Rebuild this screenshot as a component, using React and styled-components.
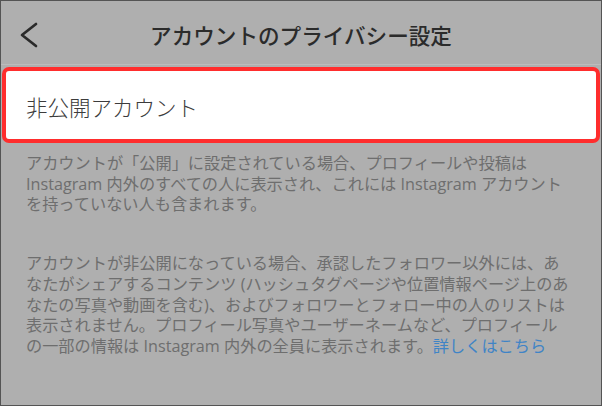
import React from "react";
import styled, { createGlobalStyle } from "styled-components";

const GlobalStyle = createGlobalStyle`
  html, body {
    margin: 0;
    padding: 0;
    background: #afafaf;
  }
  * {
    box-sizing: border-box;
  }
`;

const Screen = styled.div`
  width: 602px;
  height: 406px;
  border: 1px solid #545454;
  background: #afafaf;
  font-family: Roboto, "Noto Sans CJK JP", sans-serif;
  overflow: hidden;
`;

const Header = styled.header`
  display: grid;
  grid-template-columns: 1fr auto 1fr;
  align-items: center;
  height: 64px;
  padding-top: 4px;
  border-bottom: 1px solid #bcbcbc;
`;

const BackButton = styled.button`
  justify-self: start;
  display: flex;
  align-items: center;
  margin-left: 15px;
  padding: 0;
  border: none;
  background: none;
`;

const Title = styled.h1`
  margin: 0;
  font-size: 21.6px;
  font-weight: 500;
  color: #2b2b2b;
  white-space: nowrap;
`;

const Highlight = styled.div`
  margin: 2px 1px 0;
  height: 76px;
  border: 4px solid #ff2d2d;
  border-radius: 7px;
  background: #ffffff;
  display: flex;
  align-items: center;
  padding: 2px 0 0 20px;
`;

const OptionLabel = styled.span`
  font-size: 21.5px;
  font-weight: 300;
  color: #3c3c3c;
`;

const Body = styled.div`
  display: flex;
  flex-direction: column;
  gap: 38px;
  padding: 10px 0 0 25px;
`;

const Paragraph = styled.p`
  margin: 0;
  font-family: "Open Sans", "Noto Sans CJK JP", sans-serif;
  font-size: 16.2px;
  line-height: 20.7px;
  color: #6e6e6e;
  white-space: nowrap;
`;

const Link = styled.a`
  color: #3f84c6;
  text-decoration: none;
`;

function ChevronLeft() {
  return (
    <svg width="24" height="30" viewBox="0 0 24 30" fill="none">
      <path
        d="M20 4 L6 15 L20 26"
        stroke="#2a2a2a"
        strokeWidth="2.7"
        strokeLinecap="round"
        strokeLinejoin="round"
      />
    </svg>
  );
}

export default function App() {
  return (
    <>
      <GlobalStyle />
      <Screen>
        <Header>
          <BackButton aria-label="戻る">
            <ChevronLeft />
          </BackButton>
          <Title>アカウントのプライバシー設定</Title>
          <span />
        </Header>
        <Highlight>
          <OptionLabel>非公開アカウント</OptionLabel>
        </Highlight>
        <Body>
          <Paragraph>
            アカウントが「公開」に設定されている場合、プロフィールや投稿は
            <br />
            Instagram 内外のすべての人に表示され、これには Instagram アカウント
            <br />
            を持っていない人も含まれます。
          </Paragraph>
          <Paragraph>
            アカウントが非公開になっている場合、承認したフォロワー以外には、あ
            <br />
            なたがシェアするコンテンツ (ハッシュタグページや位置情報ページ上のあ
            <br />
            なたの写真や動画を含む)、およびフォロワーとフォロー中の人のリストは
            <br />
            表示されません。プロフィール写真やユーザーネームなど、プロフィール
            <br />
            の一部の情報は Instagram 内外の全員に表示されます。
            <Link href="#">詳しくはこちら</Link>
          </Paragraph>
        </Body>
      </Screen>
    </>
  );
}
